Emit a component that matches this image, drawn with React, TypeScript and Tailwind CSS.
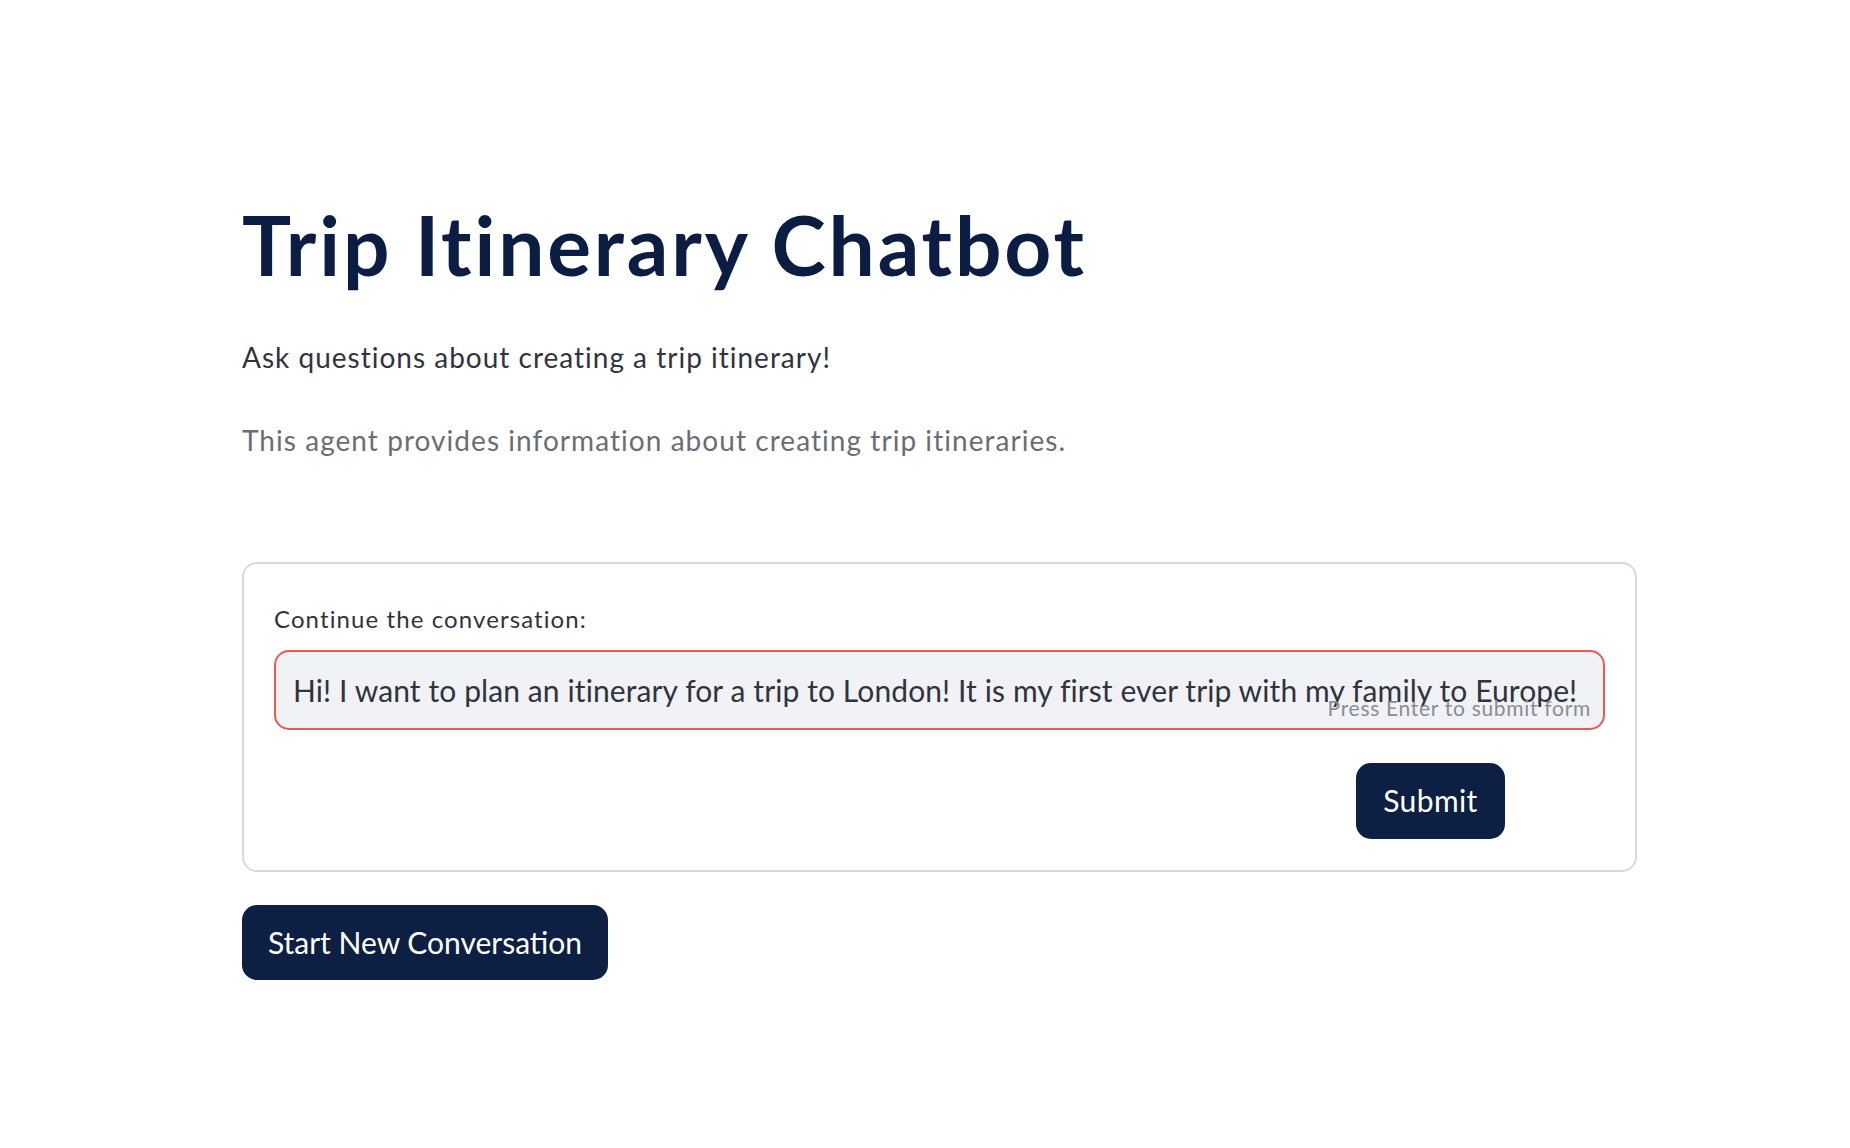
import { useState } from "react";

const font = { fontFamily: '"Lato", "Noto Sans", sans-serif' };

export default function App() {
    const [message, setMessage] = useState(
        "Hi! I want to plan an itinerary for a trip to London! It is my first ever trip with my family to Europe!"
    );

    return (
        <div className="min-h-screen w-full bg-white" style={font}>
            <div className="ml-[242px] w-[1395px] pt-[195px]">
                <h1 className="text-[82px] font-bold leading-[1.2] text-[#0b1d42] tracking-[2.85px]">
                    Trip Itinerary Chatbot
                </h1>
                <p className="mt-[43px] text-[28px] leading-[1.5] tracking-[1px] text-[#31333f]">
                    Ask questions about creating a trip itinerary!
                </p>
                <p className="mt-[41px] text-[28px] leading-[1.5] tracking-[1.05px] text-[#6b6d76]">
                    This agent provides information about creating trip itineraries.
                </p>

                {/* форма */}
                <form
                    className="mt-[101px] h-[310px] rounded-[15px] border-2 border-[#d9d9d9] px-[30px] pt-[38px]"
                    onSubmit={(e) => e.preventDefault()}
                >
                    <label className="block text-[24px] leading-[1.4] tracking-[1.1px] text-[#31333f]">
                        Continue the conversation:
                    </label>
                    <div className="relative mt-[14px] h-[80px] rounded-[15px] border-2 border-[#ec5953] bg-[#f0f2f6]">
                        <input
                            value={message}
                            onChange={(e) => setMessage(e.target.value)}
                            className="h-full w-full bg-transparent pl-[17px] pr-[6px] text-[30px] tracking-[0.1px] text-[#31333f] outline-none"
                            style={font}
                        />
                        <span className="pointer-events-none absolute bottom-[10px] right-[12px] text-[21px] leading-none tracking-[0.7px] text-[#8a8c94]">
                            Press Enter to submit form
                        </span>
                    </div>
                    <div className="mt-[33px] flex">
                        <div className="flex-1" />
                        <div className="flex w-[249px] justify-start">
                            <button
                                type="submit"
                                className="h-[76px] w-[149px] rounded-[15px] bg-[#0d1f42] text-[30px] tracking-[0.4px] text-white"
                            >
                                Submit
                            </button>
                        </div>
                    </div>
                </form>

                <button className="mt-[33px] h-[75px] w-[366px] rounded-[15px] bg-[#0d1f42] text-[30px] text-white">
                    Start New Conversation
                </button>
            </div>
        </div>
    );
}
